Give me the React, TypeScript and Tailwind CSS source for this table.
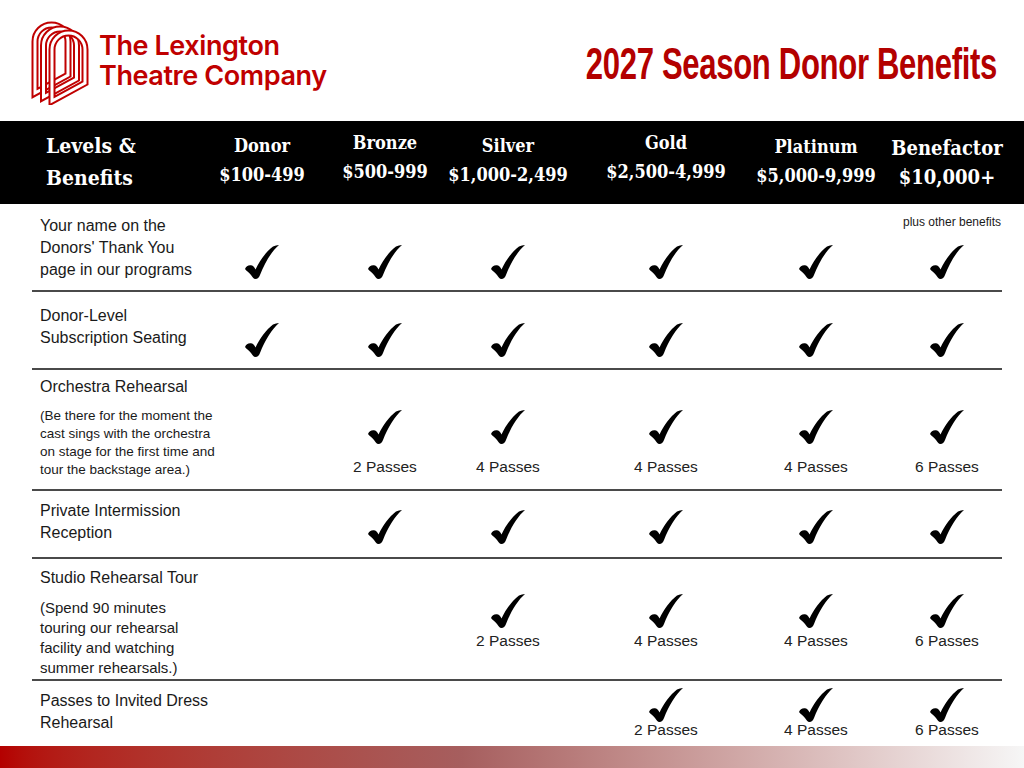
import React from "react";

type Cell = null | { passes?: string };

type Row = {
  label: string[];
  desc?: string[];
  descClass?: string;
  height: string;
  labelPt: string;
  cellPt: string;
  passGap?: string;
  cells: Cell[];
};

const levels = [
  { name: "Donor", price: "$100-499", pt: "pt-[10px]" },
  { name: "Bronze", price: "$500-999", pt: "pt-[7px]" },
  { name: "Silver", price: "$1,000-2,499", pt: "pt-[10px]" },
  { name: "Gold", price: "$2,500-4,999", pt: "pt-[7px]" },
  { name: "Platinum", price: "$5,000-9,999", pt: "pt-[11px]" },
  { name: "Benefactor", price: "$10,000+", pt: "pt-[13px]" },
];

const ok = {};

const rows: Row[] = [
  {
    label: ["Your name on the", "Donors' Thank You", "page in our programs"],
    height: "h-[86px]",
    labelPt: "pt-[11px]",
    cellPt: "pt-[41px]",
    cells: [ok, ok, ok, ok, ok, ok],
  },
  {
    label: ["Donor-Level", "Subscription Seating"],
    height: "h-[76px]",
    labelPt: "pt-[13px]",
    cellPt: "pt-[31px]",
    cells: [ok, ok, ok, ok, ok, ok],
  },
  {
    label: ["Orchestra Rehearsal"],
    desc: [
      "(Be there for the moment the",
      "cast sings with the orchestra",
      "on stage for the first time and",
      "tour the backstage area.)",
    ],
    descClass: "mt-[9px] text-[13.5px] leading-[18px]",
    height: "h-[119px]",
    labelPt: "pt-[6px]",
    cellPt: "pt-[40px]",
    passGap: "mt-[13px]",
    cells: [
      null,
      { passes: "2 Passes" },
      { passes: "4 Passes" },
      { passes: "4 Passes" },
      { passes: "4 Passes" },
      { passes: "6 Passes" },
    ],
  },
  {
    label: ["Private Intermission", "Reception"],
    height: "h-[66px]",
    labelPt: "pt-[9px]",
    cellPt: "pt-[19px]",
    cells: [null, ok, ok, ok, ok, ok],
  },
  {
    label: ["Studio Rehearsal Tour"],
    desc: [
      "(Spend 90 minutes",
      "touring our rehearsal",
      "facility and watching",
      "summer rehearsals.)",
    ],
    descClass: "mt-[9px] text-[15px] leading-[20px]",
    height: "h-[120px]",
    labelPt: "pt-[8px]",
    cellPt: "pt-[35px]",
    passGap: "mt-[3px]",
    cells: [
      null,
      null,
      { passes: "2 Passes" },
      { passes: "4 Passes" },
      { passes: "4 Passes" },
      { passes: "6 Passes" },
    ],
  },
  {
    label: ["Passes to Invited Dress", "Rehearsal"],
    height: "h-[65px]",
    labelPt: "pt-[9px]",
    cellPt: "pt-[7px]",
    passGap: "-mt-[2px]",
    cells: [
      null,
      null,
      null,
      { passes: "2 Passes" },
      { passes: "4 Passes" },
      { passes: "6 Passes" },
    ],
  },
];

const cols = "grid grid-cols-[168px_124px_122px_124px_192px_108px_154px]";

function Check() {
  return (
    <svg viewBox="0 0 34 34" className="w-[34px] h-[34px] shrink-0">
      <path
        d="M0 24 C1 21 4 19.5 7 20.5 C8.5 21 9.5 22.5 10.5 24.5 C15 15 21 7 28 1.5 C30 0.5 32 0 34 0 C27 6 20 17 15 30 C14 32.5 12.5 34 10.5 34 C8.5 34 7.5 32 6 30 C4 27.5 1.5 26 0 24 Z"
        fill="#000"
      />
    </svg>
  );
}

function arch(x: number, y: number, w: number, hl: number, hr: number) {
  const r = w / 2;
  return `M${x} ${y + hl} L${x} ${y + r} A${r} ${r} 0 0 1 ${x + w} ${y + r} L${x + w} ${y + hr} Z`;
}

function Logo() {
  const arches = [arch(4, 4, 33, 68, 50), arch(12.5, 8, 33, 68, 50), arch(21, 12, 33, 68, 50)];
  return (
    <svg viewBox="0 0 58 84" className="w-[58px] h-[84px]">
      {arches.map((d, i) => (
        <g key={i}>
          <path d={d} fill="none" stroke="#c00000" strokeWidth={7} strokeLinejoin="miter" />
          <path d={d} fill="none" stroke="#fff" strokeWidth={3} strokeLinejoin="miter" />
        </g>
      ))}
    </svg>
  );
}

export default function App() {
  return (
    <div className="w-[1024px] h-[768px] overflow-hidden bg-white flex flex-col font-['Liberation_Sans',Arial,sans-serif] text-[#1a1a1a]">
      {/* top */}
      <div className="h-[121px] flex items-center justify-between pl-[31px] pr-[27px]">
        <div className="flex items-center gap-[10px] mt-[4px]">
          <Logo />
          <div className="font-['Inter',sans-serif] font-semibold text-[#c00000] text-[27px] leading-[30px] tracking-[-0.015em] -mt-[4px]">
            <div>The Lexington</div>
            <div>Theatre Company</div>
          </div>
        </div>
        <h1 className="font-['Liberation_Sans',Arial,sans-serif] font-bold text-[#b30000] text-[45px] leading-none tracking-[-0.01em] scale-x-[0.69] origin-right whitespace-nowrap mt-[6px]">
          2027 Season Donor Benefits
        </h1>
      </div>

      {/* header bar */}
      <div className={`${cols} h-[83px] bg-black text-white pl-[32px] font-['DejaVu_Serif',serif] font-bold font-stretch-condensed`}>
        <div className="pl-[14px] pt-[9px] text-[21px] leading-[32px]">
          <div>Levels &amp;</div>
          <div>Benefits</div>
        </div>
        {levels.map((l) => (
          <div key={l.name} className={`flex flex-col items-center ${l.pt} text-[18px] leading-[29px] whitespace-nowrap`}>
            <div className={l.name === "Benefactor" ? "text-[20px]" : ""}>{l.name}</div>
            <div className={l.name === "Benefactor" ? "text-[20px]" : ""}>{l.price}</div>
          </div>
        ))}
      </div>

      {/* rows */}
      {rows.map((r, ri) => (
        <React.Fragment key={ri}>
          <div className={`${cols} ${r.height} pl-[32px]`}>
            <div className={`pl-[8px] ${r.labelPt} whitespace-nowrap`}>
              <div className="text-[16px] leading-[22px]">
                {r.label.map((t) => (
                  <div key={t}>{t}</div>
                ))}
              </div>
              {r.desc && (
                <div className={r.descClass}>
                  {r.desc.map((t) => (
                    <div key={t}>{t}</div>
                  ))}
                </div>
              )}
            </div>
            {r.cells.map((c, ci) => {
              if (ri === 0 && ci === 5) {
                return (
                  <div key={ci} className="flex flex-col items-center pt-[10px]">
                    <div className="text-[12px] leading-[16px] whitespace-nowrap pl-[10px]">plus other benefits</div>
                    <div className="mt-[15px]">
                      <Check />
                    </div>
                  </div>
                );
              }
              return (
                <div key={ci} className={`flex flex-col items-center ${r.cellPt}`}>
                  {c && <Check />}
                  {c && c.passes && (
                    <div className={`${r.passGap} text-[15.5px] leading-[20px] whitespace-nowrap text-[#222]`}>{c.passes}</div>
                  )}
                </div>
              );
            })}
          </div>
          {ri < rows.length - 1 && <div className="ml-[32px] w-[970px] h-[2px] bg-[#4a4a4a]" />}
        </React.Fragment>
      ))}

      <div className="mt-auto h-[22px] bg-linear-to-r from-[#b40000] via-[#a65e5e] via-45% to-[#f6f6f6]" />
    </div>
  );
}
